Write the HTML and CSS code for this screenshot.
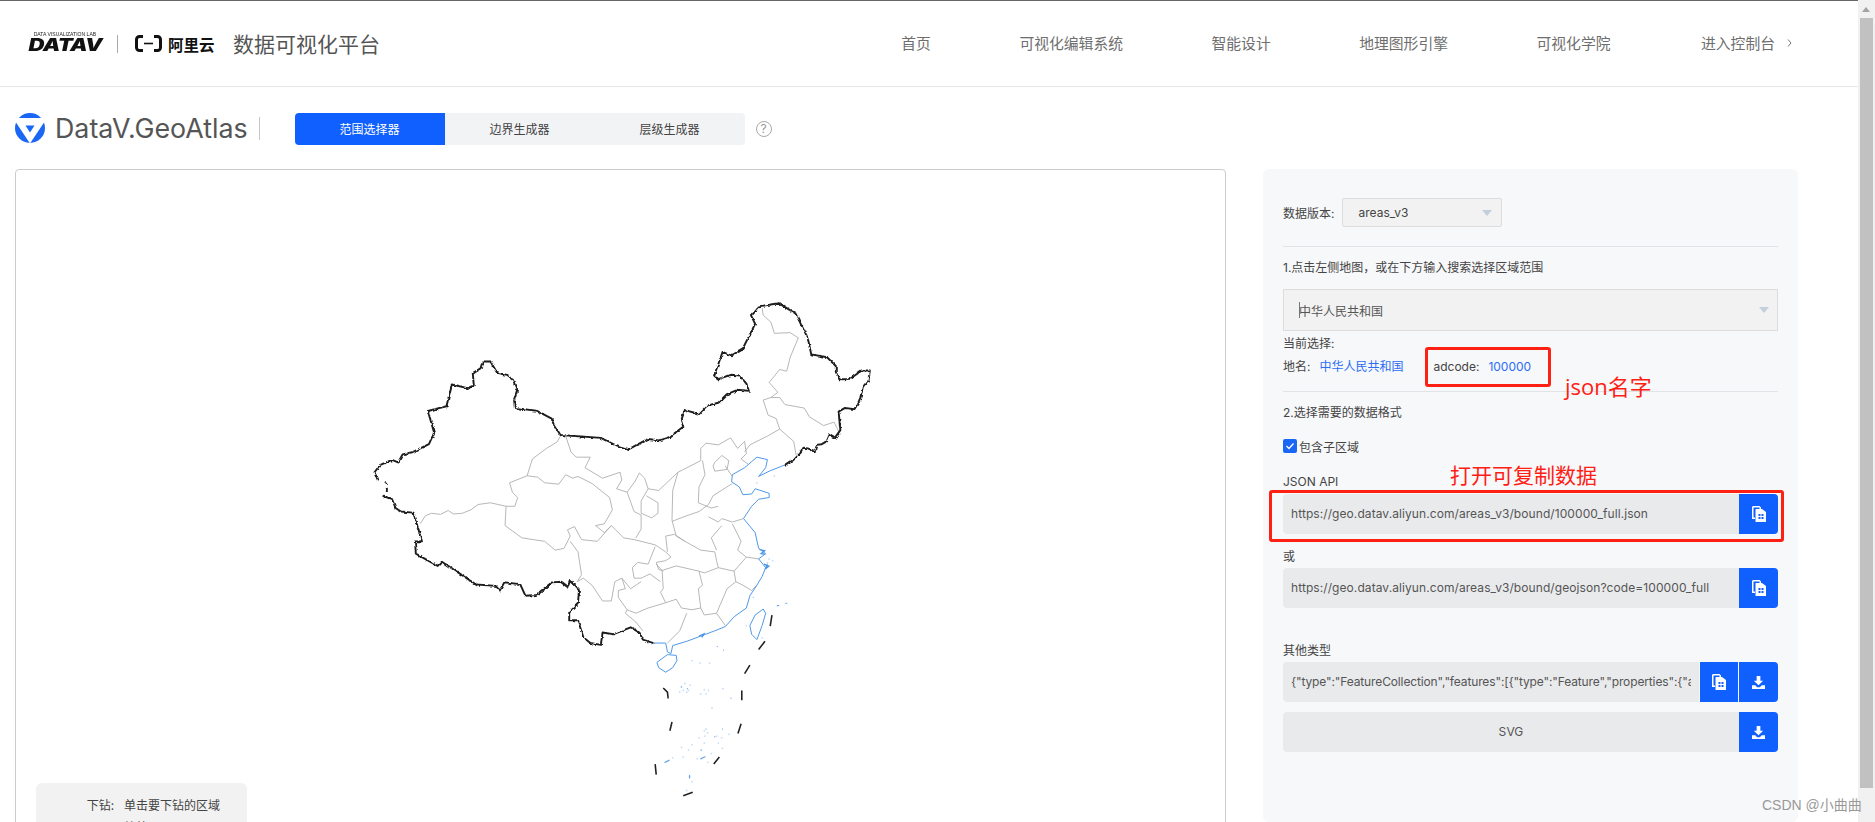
FILE: index.html
```html
<!DOCTYPE html>
<html lang="zh">
<head>
<meta charset="utf-8">
<title>DataV.GeoAtlas</title>
<link rel="stylesheet" href="styles.css">
</head>
<body>
<svg class="defs" width="0" height="0" aria-hidden="true">
  <symbol id="ic-copy" viewBox="0 0 14 16">
    <path fill="#fff" fill-rule="evenodd" d="M1 0h6.500l1.500 1.500v1.500h-1.500v-1.500h-6v10h1.500v1.500h-2.500a.5.500 0 0 1-.5-.5v-11.500a.5.500 0 0 1 .5-.5z"/>
    <path fill="#fff" fill-rule="evenodd" d="M4 3h6l4 3v9.500a.5.500 0 0 1-.5.5h-9.500a.5.500 0 0 1-.5-.5v-12a.5.500 0 0 1 .5-.5zM6.500 8v2h2v-2zM9.500 8v2h2v-2zM6.500 11v2h2v-2zM9.500 11v2h2v-2z"/>
  </symbol>
  <symbol id="ic-down" viewBox="0 0 14 14">
    <path fill="#fff" d="M5 0h4v5h3l-5 5-5-5h3zM0 10h3.500l2 2h3l2-2h3.500v4h-14z"/>
  </symbol>
</svg>

<header class="topbar">
  <div class="brand">
    <div class="datav"><span class="datav-sub">DATA VISUALIZATION LAB</span><span class="datav-main">DATAV</span></div>
    <i class="brand-sep"></i>
    <svg class="ali-mark" viewBox="0 0 27 17" aria-hidden="true"><path fill="none" stroke="#111" stroke-width="3" d="M8 1.500h-3.500a3 3 0 0 0-3 3v8a3 3 0 0 0 3 3h3.500M19 1.500h3.500a3 3 0 0 1 3 3v8a3 3 0 0 1-3 3h-3.500"/><path stroke="#111" stroke-width="1.600" d="M9 8.500h9"/></svg>
    <span class="ali-text">阿里云</span>
    <span class="brand-title">数据可视化平台</span>
  </div>
  <nav class="nav">
    <a>首页</a><a>可视化编辑系统</a><a>智能设计</a><a>地理图形引擎</a><a>可视化学院</a><a class="nav-console">进入控制台<svg class="nav-arrow" viewBox="0 0 5 8" aria-hidden="true"><path fill="none" stroke="#777" d="M1 .5l3 3.500-3 3.500"/></svg></a>
  </nav>
</header>

<section class="subbar">
  <svg class="geo-logo" viewBox="0 0 30 30" aria-hidden="true">
    <circle cx="15" cy="15" r="15" fill="#1a66f5"/>
    <path fill="#fff" d="M-2 5h34L15 30.500z"/>
    <path fill="#1a66f5" d="M10.500 12.500h9L15 19.500z"/>
  </svg>
  <span class="geo-name">DataV.GeoAtlas</span>
  <i class="geo-sep"></i>
  <div class="tabs">
    <a class="tab tab-active">范围选择器</a><a class="tab">边界生成器</a><a class="tab">层级生成器</a>
  </div>
  <span class="help">?</span>
</section>

<main class="main">
  <section class="map">
    <svg class="china" viewBox="0 0 1568 1545" aria-label="中国地图">
      <defs>
        <filter id="rough" filterUnits="userSpaceOnUse" x="0" y="0" width="1568" height="1545">
          <feTurbulence type="turbulence" baseFrequency="0.05" numOctaves="2" seed="4" result="n"/>
          <feDisplacementMap in="SourceGraphic" in2="n" scale="4" xChannelSelector="R" yChannelSelector="G"/>
        </filter>
      </defs>
      <g class="prov">
        <polyline points="200,695 215,672 232,665 258,668 280,657 295,667 320,665 345,655 365,640 400,635 445,645 470,645 478,620 463,605 455,578 505,558 520,510 560,480 590,462 600,445"/>
        <polyline points="505,558 535,562 555,578 595,582 615,555 635,565 650,560 690,580 740,620 748,655 725,695 700,700 725,720 745,700"/>
        <polyline points="445,645 442,700 490,735 555,745 585,770 610,765 628,730 620,712 640,703 660,740 705,745 745,700 780,735 810,740 870,755 900,775 915,790 900,800 873,805 880,825 893,830"/>
        <polyline points="628,745 650,775 660,840 648,860 665,850 690,870 720,915 745,915 755,860 775,850 785,880 765,885 765,905 790,940 785,950 815,975 835,1000"/>
        <polyline points="615,445 630,490 645,505 685,505 670,535 720,565 770,548 775,570 760,595 790,605 812,575 825,550 840,565 850,595 880,600 935,548 1000,515 1000,480 1015,465 1050,470 1085,450 1105,480 1125,460 1130,495 1115,510 1135,525"/>
        <polyline points="1125,490 1140,470 1190,445 1225,425 1265,460 1272,500"/>
        <polyline points="1175,80 1178,100 1200,120 1210,152 1255,150 1278,165 1255,220 1245,260 1225,255 1195,292 1220,320 1200,335 1178,342 1192,385 1215,395 1225,425"/>
        <polyline points="1200,335 1225,335 1240,355 1295,365 1310,390 1350,415 1380,405 1395,435"/>
        <polyline points="850,595 830,630 830,665 860,678 878,665 878,635 845,615"/>
        <polyline points="790,605 810,660 830,670 830,710 815,735"/>
        <polyline points="935,548 920,600 918,685 930,730 955,745 1000,770 1040,775 1045,800 1050,820"/>
        <polyline points="1005,515 1012,555 995,590 993,635 1030,650 1050,645"/>
        <polyline points="918,688 960,672 995,660 1022,640 1035,615 1090,580"/>
        <polyline points="1022,675 1050,690 1060,680 1090,690 1122,680"/>
        <polyline points="1060,700 1030,735 1045,770"/>
        <polyline points="1090,695 1115,745 1105,770 1130,790 1165,795"/>
        <polyline points="900,730 925,725 955,745"/>
        <polyline points="900,730 905,775"/>
        <polyline points="873,810 890,828 930,815 995,830 1010,835 1050,820 1095,830 1130,790"/>
        <polyline points="995,830 1005,870 993,880 1000,935"/>
        <polyline points="890,830 893,880 885,890 900,920 930,910 945,935 975,940 1000,935 1010,955 1045,950 1070,985"/>
        <polyline points="1095,830 1100,860 1120,870 1145,885 1160,870"/>
        <polyline points="1100,860 1075,880 1060,915 1045,950"/>
        <polyline points="805,820 820,805 850,810 870,760"/>
        <polyline points="805,820 810,850 830,850 855,838 885,860"/>
        <polyline points="775,850 800,880 830,860"/>
        <polyline points="790,940 815,950 850,935 900,920"/>
        <polyline points="960,950 940,1000 905,1035"/>
        <polyline points="1040,520 1060,500 1080,515 1075,540 1040,545 1035,530 1040,520"/>
        <polyline points="1070,530 1090,560"/>
      </g>
      <g class="coast">
        <polyline points="865,1035 900,1035 905,1060 915,1065 920,1042 960,1030 1000,1015 1040,1000 1070,988 1095,960 1130,935 1140,900 1160,870 1175,845 1185,820 1165,795 1185,780 1165,765 1155,720 1122,680 1145,645 1165,625 1195,620 1195,608 1155,595 1145,610 1120,612 1110,590 1088,575 1090,555 1125,535 1160,505 1190,512 1185,535 1165,560 1195,545 1240,527"/>
        <polygon points="875,1090 905,1068 930,1070 932,1085 920,1105 900,1118 880,1105"/>
        <polygon points="1140,985 1155,955 1178,938 1185,950 1175,985 1160,1025 1145,1010"/>
        <path class="coast-knot" d="M1167 768l15 4-10 8 12 2M1180 810l14 6-10 8 6-14M995 1015l14-6-6 10"/>
      </g>
      <path class="border" d="M1240 527L1255 517 1270 505 1280 495 1290 478 1305 480 1325 488 1330 470 1345 468 1355 462 1365 440 1382 450 1398 428 1393 375 1410 365 1438 368 1448 352 1455 335 1462 305 1478 285 1482 258 1455 258 1435 272 1420 282 1395 283 1385 262 1385 245 1360 220 1315 212 1305 165 1295 145 1285 125 1270 95 1245 80 1222 66 1165 75 1143 100 1155 125 1135 165 1120 195 1085 215 1062 205 1050 240 1038 272 1048 283 1085 270 1110 272 1130 295 1137 316 1105 313 1075 325 1050 350 1018 358 995 382 952 370 943 395 950 418 910 448 880 457 850 453 795 482 755 470 715 450 600 442 580 410 575 395 533 373 470 365 468 340 476 315 465 285 445 270 420 265 400 232 378 232 372 252 350 265 353 300 335 308 290 298 275 360 222 373 240 435 225 468 180 490 150 497 137 520 120 513 85 528 70 548 80 572M100 575L106 582M105 592V604M93 615L120 625 130 650 145 660 178 663 190 695 195 710 205 745 185 745 188 780 205 790 250 815 262 803 310 835 340 855 360 868 415 872 427 885 440 862 485 867 500 900 530 898 575 862 600 860 620 875 627 855 653 882 650 920 625 945 625 970 650 970 665 1018 685 1035 715 1040 720 1005 750 1010 800 990 825 1005 835 1025 865 1035"/>
      <path class="islets" d="M1195 795h0M1205 800h0M1190 806h0M1150 905h0M1130 985h0M1175 1020h0M1210 558h0M1160 578h0M975 1085h0M998 1092h0M1025 1092h0M1245 922h0M945 1160h0M955 1150h0M970 1155h0M965 1170h0M950 1170h0M940 1175h0M960 1175h0M1000 1180h0M1010 1168h0M1022 1170h0M1015 1180h0M1063 1165h0M1032 1220h0M1010 1285h0M1020 1290h0M1012 1300h0M1045 1300h0M1060 1305h0M1080 1295h0M1050 1320h0M1062 1335h0M995 1305h0M975 1325h0M945 1332h0M965 1340h0M1010 1320h0M1000 1340h0M1030 1350h0M950 1360h0M990 1365h0M1020 1375h0M905 1372h0M920 1362h0M968 1415h0M975 1430h0M960 1455h0"/>
      <path class="islets-dark" d="M1218 928h4M1243 922h0M1047 1045h0M1065 1055h0M945 1160h0M962 1165h0M1086 1192h0M1015 1280h0M1040 1302h0M1062 1280h0M1000 1365l12-6M1002 1340h0M898 1375l12-6M968 1412v8"/>
      <path class="dash" d="M1203 955L1198 987M1183 1030L1165 1053M1140 1098L1125 1122M893 1163L905 1175 907 1193M1117 1170V1198M918 1260L912 1285M1115 1265L1106 1293M1053 1360L1037 1380M870 1380L873 1410M977 1460L950 1470"/>
    </svg>
    <div class="legend">
      <div class="legend-row"><span class="legend-key">下钻:</span><span>单击要下钻的区域</span></div>
      <div class="legend-row"><span class="legend-key"></span><span>缩放</span></div>
    </div>
  </section>

  <aside class="panel">
    <div class="version">
      <span>数据版本:</span>
      <div class="select select-small">areas_v3<i class="chev"></i></div>
    </div>
    <hr class="rule rule-a">
    <p class="line line-a">1.点击左侧地图&#xFF0C;或在下方输入搜索选择区域范围</p>
    <div class="select select-wide"><i class="caret"></i>中华人民共和国<i class="chev"></i></div>
    <p class="line line-b">当前选择:</p>
    <p class="line line-c"><span>地名:</span><span class="val val-name">中华人民共和国</span><span class="code-key">adcode:</span><span class="val val-code">100000</span></p>
    <hr class="rule rule-b">
    <p class="line line-d">2.选择需要的数据格式</p>
    <label class="check"><i class="box"><svg viewBox="0 0 14 14" aria-hidden="true"><path fill="none" stroke="#fff" stroke-width="1.300" d="M3.500 7l2.500 2.500 4.500-5"/></svg></i>包含子区域</label>

    <p class="line line-e">JSON API</p>
    <div class="field"><span class="field-text">https://geo.datav.aliyun.com/areas_v3/bound/100000_full.json</span><button class="btn"><svg class="i-copy"><use href="#ic-copy"/></svg></button></div>
    <p class="line line-f">或</p>
    <div class="field"><span class="field-text">https://geo.datav.aliyun.com/areas_v3/bound/geojson?code=100000_full</span><button class="btn"><svg class="i-copy"><use href="#ic-copy"/></svg></button></div>
    <p class="line line-g">其他类型</p>
    <div class="field"><span class="field-text field-clip">{"type":"FeatureCollection","features":[{"type":"Feature","properties":{"adcode":100000,"name":"中华人民共和国"}}]}</span><button class="btn btn-mid"><svg class="i-copy"><use href="#ic-copy"/></svg></button><button class="btn"><svg class="i-down"><use href="#ic-down"/></svg></button></div>
    <div class="field field-svg"><span class="field-text field-center">SVG</span><button class="btn"><svg class="i-down"><use href="#ic-down"/></svg></button></div>

    <i class="mark mark-code"></i>
    <i class="mark mark-json"></i>
    <span class="note note-json">json名字</span>
    <span class="note note-copy">打开可复制数据</span>
  </aside>
</main>

<div class="scroll"><span class="scroll-up"></span><span class="scroll-thumb"></span></div>
<span class="watermark">CSDN @小曲曲</span>
</body>
</html>
```
FILE: styles.css
```css
* { box-sizing: border-box; }
html, body { margin: 0; height: 822px; overflow: hidden; }
body {
  position: relative;
  background: #fff;
  color: #444;
  font-family: Inter, "Noto Sans CJK SC", sans-serif;
  font-size: 12px;
}
.defs { position: absolute; }
p { margin: 0; }

/* header */
.topbar {
  height: 87px;
  border-top: 1px solid #666;
  border-bottom: 1px solid #e6e6e6;
  display: flex;
  align-items: center;
  padding: 0 83px 0 27px;
}
.brand { display: flex; align-items: center; }
.datav { width: 76px; height: 21px; display: flex; flex-direction: column; align-items: center; margin-top: -4px; }
.datav-sub { font: 5.500px/7px "Liberation Sans", sans-serif; color: #222; white-space: nowrap; transform: scaleX(.92); }
.datav-main { font: italic 900 17px/14px Inter, sans-serif; color: #111; letter-spacing: -.5px; transform: scaleX(1.3); }
.brand-sep { width: 1px; height: 18px; background: #aaa; margin: 0 17px 0 14px; }
.ali-mark { width: 27px; height: 17px; margin-right: 6px; }
.ali-text { font: 700 15.500px/20px "Noto Sans CJK SC", sans-serif; color: #111; width: 52px; }
.brand-title { font: 400 21px/28px "Noto Sans CJK SC", sans-serif; color: #555; margin: -2px 0 0 13px; }
.nav { display: flex; gap: 88.500px; margin-left: auto; margin-top: -2px; font: 400 14.800px/20px "Noto Sans CJK SC", sans-serif; color: #6e6e6e; }
.nav a { display: block; }
.nav-console { display: flex !important; align-items: center; margin-left: 2px; }
.nav-arrow { width: 5px; height: 8px; margin-left: 12px; }

/* sub bar */
.subbar { height: 82px; padding-left: 15px; display: flex; align-items: center; }
.geo-logo { width: 30px; height: 30px; overflow: hidden; }
.geo-name { font: 400 26.800px/32px Inter, sans-serif; color: #555; margin-left: 10px; white-space: nowrap; }
.geo-sep { width: 1px; height: 23px; background: #c8c8c8; margin: 0 35px 0 11px; }
.tabs { display: flex; width: 450px; height: 32px; background: #f2f3f5; border-radius: 4px; overflow: hidden; margin-top: 2px; }
.tab { width: 150px; text-align: center; line-height: 32px; color: #444; font-family: "Noto Sans CJK SC", sans-serif; }
.tab-active { background: #1060ff; color: #fff; }
.help { width: 16px; height: 16px; border: 1px solid #aaa; border-radius: 50%; color: #999; font: 12px/14px Inter, sans-serif; text-align: center; margin: 2px 0 0 11px; }

/* main */
.main { display: flex; align-items: flex-start; padding-left: 15px; }
.map { position: relative; width: 1211px; height: 700px; border: 1px solid #ccc; border-radius: 4px; flex: none; }
.china { position: absolute; left: 334px; top: 110px; width: 550px; height: 542px; fill: none; }
.prov polyline { fill: none; stroke: #adadaa; stroke-width: 2.500; stroke-linejoin: round; }
.coast polyline, .coast polygon { fill: none; stroke: #4c96e6; stroke-width: 2.800; stroke-linejoin: round; }
.coast-knot { fill: none; stroke: #4c96e6; stroke-width: 4; }
.islets { fill: none; stroke: #c5ddf6; stroke-width: 5; stroke-linecap: round; }
.islets-dark { fill: none; stroke: #6aa6ea; stroke-width: 3.500; stroke-linecap: round; }
.border { fill: none; stroke: #1c1c1c; stroke-width: 5.500; stroke-linejoin: round; filter: url(#rough); }
.dash { fill: none; stroke: #222; stroke-width: 4.500; }
.legend {
  position: absolute; left: 20px; top: 613px; width: 211px; height: 70px;
  background: #f2f2f2; border-radius: 6px; padding: 11px 0 0;
  font-family: "Noto Sans CJK SC", sans-serif; color: #444; line-height: 22px;
}
.legend-row { display: flex; }
.legend-key { width: 78px; text-align: right; margin-right: 10px; }

/* right panel */
.panel {
  position: relative; flex: none; margin-left: 37px; width: 535px; height: 653px;
  padding: 29px 20px 0; background: #f7f8fa; border-radius: 6px;
  font-family: Inter, "Noto Sans CJK SC", sans-serif;
}
.line { line-height: 17px; color: #444; }
.version { display: flex; align-items: center; gap: 8px; height: 29px; color: #444; }
.select { position: relative; background: #f2f2f2; border: 1px solid #ddd; display: flex; align-items: center; }
.select-small { width: 160px; height: 29px; padding-left: 15px; border-radius: 2px; }
.select-wide { height: 42px; margin-top: 13px; padding-left: 15px; color: #555; }
.chev { position: absolute; right: 9px; top: 50%; margin-top: -3px; width: 0; height: 0; border: 5.500px solid transparent; border-top: 6px solid #c3cfdc; border-bottom: 0; }
.select-wide .chev { right: 8px; }
.caret { width: 1px; height: 16px; background: #777; margin-right: -1px; }
.rule { border: 0; height: 1px; background: #e2e3e6; margin: 0; }
.rule-a { margin-top: 19px; }
.line-a { margin-top: 12px; }
.line-b { margin-top: 4px; }
.line-c { margin-top: 6px; display: flex; }
.val { color: #2a6cf6; }
.val-name { margin-left: 9px; }
.code-key { margin-left: 30px; }
.val-code { margin-left: 9px; }
.rule-b { margin-top: 16px; }
.line-d { margin-top: 12px; }
.check { display: flex; align-items: center; height: 14px; margin-top: 18px; color: #444; gap: 2px; }
.box { width: 14px; height: 14px; background: #1a66f5; border-radius: 2px; display: block; }
.box svg { display: block; width: 14px; height: 14px; }
.line-e { margin-top: 20px; }
.line-f { margin: 14px 0 -1px; }
.line-g { margin: 34px 0 -1px; }
.field { display: flex; height: 40px; margin-top: 4px; background: #e9eaec; border-radius: 4px; overflow: hidden; }
.field-svg { margin-top: 10px; }
.field-text { flex: 1; min-width: 0; padding: 0 8px; line-height: 40px; font-size: 12px; letter-spacing: .08px; color: #555; white-space: nowrap; overflow: hidden; }
.field-clip { margin-right: 8px; padding-right: 0; letter-spacing: -.13px; }
.field-center { text-align: center; }
.btn { flex: none; width: 39px; height: 40px; padding: 0; border: 0; background: #1060ff; display: flex; align-items: center; justify-content: center; }
.btn-mid { width: 40px; border-right: 1px solid #f7f8fa; border-left: 1px solid #f7f8fa; }
.i-copy { width: 14px; height: 16px; }
.i-down { width: 13px; height: 13px; }
.mark { position: absolute; border: 3px solid #ff2014; border-radius: 3px; }
.mark-code { left: 162px; top: 178px; width: 126px; height: 40px; }
.mark-json { left: 6px; top: 321px; width: 515px; height: 52px; }
.note { position: absolute; color: #ff2014; font-family: "Open Sans", "Noto Sans CJK SC", sans-serif; white-space: nowrap; }
.note-json { left: 302px; top: 203px; font-size: 22px; line-height: 28px; }
.note-copy { left: 187px; top: 292px; font-size: 21px; line-height: 28px; }

/* page chrome */
.watermark { position: absolute; left: 1762px; top: 796px; font: 14px/18px "Liberation Sans", "Noto Sans CJK SC", sans-serif; color: #999; white-space: nowrap; }
.scroll { position: absolute; right: 0; top: 0; width: 17px; height: 822px; background: #f1f1f1; }
.scroll-up { position: absolute; left: 4px; top: 7px; width: 0; height: 0; border: 4px solid transparent; border-bottom: 5px solid #a3a3a3; border-top: 0; }
.scroll-thumb { position: absolute; left: 2px; top: 18px; width: 13px; height: 770px; background: #c1c1c1; }
```
